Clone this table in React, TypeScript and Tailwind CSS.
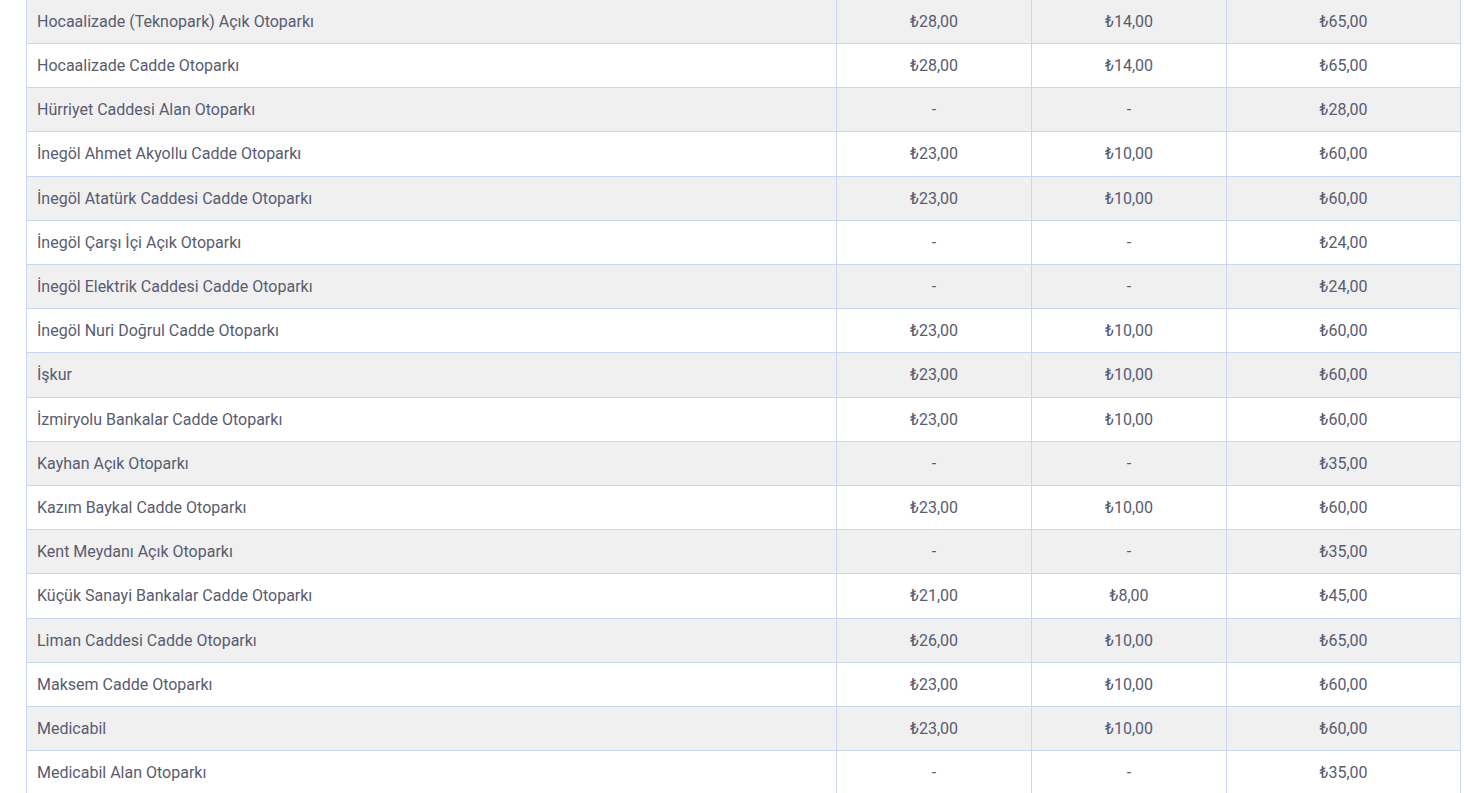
import React from 'react';

type Row = { name: string; a: string; b: string; c: string };

const rows: Row[] = [
  { name: 'Hocaalizade (Teknopark) Açık Otoparkı', a: '₺28,00', b: '₺14,00', c: '₺65,00' },
  { name: 'Hocaalizade Cadde Otoparkı', a: '₺28,00', b: '₺14,00', c: '₺65,00' },
  { name: 'Hürriyet Caddesi Alan Otoparkı', a: '-', b: '-', c: '₺28,00' },
  { name: 'İnegöl Ahmet Akyollu Cadde Otoparkı', a: '₺23,00', b: '₺10,00', c: '₺60,00' },
  { name: 'İnegöl Atatürk Caddesi Cadde Otoparkı', a: '₺23,00', b: '₺10,00', c: '₺60,00' },
  { name: 'İnegöl Çarşı İçi Açık Otoparkı', a: '-', b: '-', c: '₺24,00' },
  { name: 'İnegöl Elektrik Caddesi Cadde Otoparkı', a: '-', b: '-', c: '₺24,00' },
  { name: 'İnegöl Nuri Doğrul Cadde Otoparkı', a: '₺23,00', b: '₺10,00', c: '₺60,00' },
  { name: 'İşkur', a: '₺23,00', b: '₺10,00', c: '₺60,00' },
  { name: 'İzmiryolu Bankalar Cadde Otoparkı', a: '₺23,00', b: '₺10,00', c: '₺60,00' },
  { name: 'Kayhan Açık Otoparkı', a: '-', b: '-', c: '₺35,00' },
  { name: 'Kazım Baykal Cadde Otoparkı', a: '₺23,00', b: '₺10,00', c: '₺60,00' },
  { name: 'Kent Meydanı Açık Otoparkı', a: '-', b: '-', c: '₺35,00' },
  { name: 'Küçük Sanayi Bankalar Cadde Otoparkı', a: '₺21,00', b: '₺8,00', c: '₺45,00' },
  { name: 'Liman Caddesi Cadde Otoparkı', a: '₺26,00', b: '₺10,00', c: '₺65,00' },
  { name: 'Maksem Cadde Otoparkı', a: '₺23,00', b: '₺10,00', c: '₺60,00' },
  { name: 'Medicabil', a: '₺23,00', b: '₺10,00', c: '₺60,00' },
  { name: 'Medicabil Alan Otoparkı', a: '-', b: '-', c: '₺35,00' },
];

const cell = 'border border-[#cbd6f2] px-[10px] py-[12px] leading-[19.2px]';

export default function App() {
  return (
    <div className="h-[793px] overflow-hidden bg-white font-['Roboto','Liberation_Sans',sans-serif] text-[16px] text-[#585c70]">
      <div className="-mt-[1.2px] pl-[26px]">
        <table className="w-[1434px] table-fixed border-collapse">
          <colgroup>
            <col className="w-[810px]" />
            <col className="w-[195px]" />
            <col className="w-[195px]" />
            <col className="w-[234px]" />
          </colgroup>
          <tbody>
            {rows.map((r, i) => (
              <tr key={r.name} className={i % 2 === 0 ? 'bg-[#f0f0f0]' : 'bg-white'}>
                <td className={`${cell} text-left`}>{r.name}</td>
                <td className={`${cell} text-center`}>{r.a}</td>
                <td className={`${cell} text-center`}>{r.b}</td>
                <td className={`${cell} text-center`}>{r.c}</td>
              </tr>
            ))}
          </tbody>
        </table>
      </div>
    </div>
  );
}
